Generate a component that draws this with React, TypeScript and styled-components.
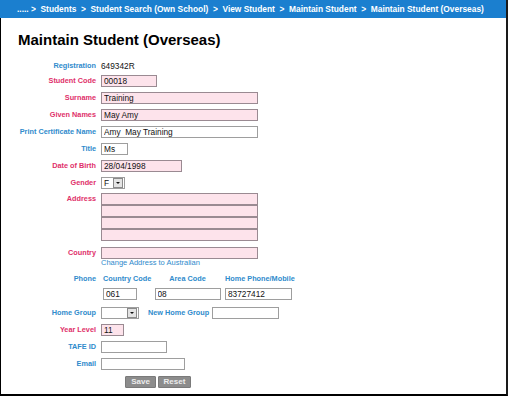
import React from "react";
import styled, { createGlobalStyle } from "styled-components";

const GlobalStyle = createGlobalStyle`
  html, body { margin: 0; padding: 0; background: #fff; }
  body { font-family: "Liberation Sans", Arial, sans-serif; }
  * { box-sizing: border-box; }
`;

const BLUE = "#2f8bcc";
const RED = "#e0306a";

const Page = styled.div`
  width: 508px;
  height: 396px;
  display: flex;
  flex-direction: column;
`;

const Bar = styled.div`
  height: 18px;
  flex: none;
  background: #1b7fcf;
  border-right: 2px solid #1a1a1a;
  color: #fff;
  font-weight: bold;
  font-size: 8.4px;
  line-height: 18px;
  padding-left: 17px;
  white-space: pre;
`;

const Main = styled.div`
  flex: 1;
  border-left: 1px solid #000;
  border-right: 2px solid #1a1a1a;
  border-bottom: 2px solid #000;
  padding-top: 13px;
`;

const Title = styled.h1`
  margin: 0 0 0 17px;
  font-size: 15px;
  line-height: 18px;
  font-weight: bold;
  color: #000;
`;

const Form = styled.div`
  margin-top: 11px;
  display: flex;
  flex-direction: column;
`;

const Row = styled.div<{ $gap?: number }>`
  display: flex;
  align-items: flex-start;
  margin-top: ${(p) => p.$gap ?? 5}px;
`;

const Label = styled.div<{ $req?: boolean }>`
  width: 95px;
  margin-right: 5px;
  flex: none;
  text-align: right;
  font-weight: bold;
  font-size: 7.3px;
  line-height: 12px;
  color: ${(p) => (p.$req ? RED : BLUE)};
  white-space: nowrap;
`;

const InlineLabel = styled.div`
  font-weight: bold;
  font-size: 7.3px;
  line-height: 12px;
  color: ${BLUE};
  white-space: nowrap;
  margin: 0 3px 0 9px;
`;

const Value = styled.div`
  font-size: 8.3px;
  line-height: 12px;
  color: #111;
`;

const Input = styled.input<{ $w: number; $req?: boolean }>`
  width: ${(p) => p.$w}px;
  height: 12px;
  margin: 0;
  padding: 0 2px;
  border: 1px solid ${(p) => (p.$req ? "#9a8a92" : "#9e9e9e")};
  background: ${(p) => (p.$req ? "#fde3eb" : "#fff")};
  font-family: "Liberation Sans", Arial, sans-serif;
  font-size: 8.3px;
  line-height: 10px;
  color: #111;
  outline: none;
  border-radius: 0;
  display: block;
`;

const Stack = styled.div`
  display: flex;
  flex-direction: column;
`;

const SelectBox = styled.div<{ $w: number }>`
  width: ${(p) => p.$w}px;
  height: 12px;
  border: 1px solid #9e9e9e;
  background: #fff;
  display: flex;
  align-items: center;
  justify-content: space-between;
  padding: 0 1px 0 2px;
  font-size: 8.3px;
  line-height: 10px;
  color: #111;
`;

const SelectArrow = styled.div`
  width: 10px;
  height: 10px;
  background: #e4e4e4;
  border: 1px solid #8a8a8a;
  display: flex;
  align-items: center;
  justify-content: center;
  &::after {
    content: "";
    border-left: 2px solid transparent;
    border-right: 2px solid transparent;
    border-top: 2px solid #111;
  }
`;

const LinkText = styled.a`
  font-size: 7.5px;
  line-height: 8px;
  color: ${BLUE};
  text-decoration: none;
`;

const PhoneGrid = styled.div`
  display: grid;
  grid-template-columns: 47px 75px 69px;
  grid-template-rows: 12px 12px;
  row-gap: 3px;
  margin-left: 2px;
`;

const PhoneHead = styled.div`
  text-align: center;
  font-weight: bold;
  font-size: 7.3px;
  line-height: 12px;
  color: ${BLUE};
  white-space: nowrap;
`;

const Cell = styled.div<{ $align: "start" | "center" }>`
  justify-self: ${(p) => p.$align};
`;

const Buttons = styled.div`
  display: flex;
  gap: 2px;
  margin-left: 24px;
`;

const Button = styled.button<{ $w: number }>`
  width: ${(p) => p.$w}px;
  height: 12px;
  padding: 0;
  margin: 0;
  background: #8c8c8c;
  border: 1px solid #7a7a7a;
  border-radius: 1px;
  color: #ececec;
  font-family: "Liberation Sans", Arial, sans-serif;
  font-weight: bold;
  font-size: 8px;
  line-height: 10px;
`;

export default function App() {
  return (
    <>
      <GlobalStyle />
      <Page>
        <Bar>{"..... >  Students  >  Student Search (Own School)  >  View Student  >  Maintain Student  >  Maintain Student (Overseas)"}</Bar>
        <Main>
          <Title>Maintain Student (Overseas)</Title>
          <Form>
            <Row $gap={0}>
              <Label>Registration</Label>
              <Value>649342R</Value>
            </Row>
            <Row $gap={3}>
              <Label $req>Student Code</Label>
              <Input $w={56} $req defaultValue="00018" />
            </Row>
            <Row>
              <Label $req>Surname</Label>
              <Input $w={157} $req defaultValue="Training" />
            </Row>
            <Row>
              <Label $req>Given Names</Label>
              <Input $w={157} $req defaultValue="May Amy" />
            </Row>
            <Row>
              <Label>Print Certificate Name</Label>
              <Input $w={157} defaultValue="Amy  May Training" />
            </Row>
            <Row>
              <Label>Title</Label>
              <Input $w={27} defaultValue="Ms" />
            </Row>
            <Row>
              <Label $req>Date of Birth</Label>
              <Input $w={81} $req defaultValue="28/04/1998" />
            </Row>
            <Row>
              <Label $req>Gender</Label>
              <SelectBox $w={24}>
                <span>F</span>
                <SelectArrow />
              </SelectBox>
            </Row>
            <Row $gap={4}>
              <Label $req>Address</Label>
              <Stack>
                <Input $w={157} $req />
                <Input $w={157} $req />
                <Input $w={157} $req />
                <Input $w={157} $req />
              </Stack>
            </Row>
            <Row $gap={6}>
              <Label $req>Country</Label>
              <Input $w={157} $req />
            </Row>
            <Row $gap={0}>
              <Label />
              <LinkText href="#">Change Address to Australian</LinkText>
            </Row>
            <Row $gap={6}>
              <Label>Phone</Label>
              <PhoneGrid>
                <PhoneHead>Country Code</PhoneHead>
                <PhoneHead>Area Code</PhoneHead>
                <PhoneHead>Home Phone/Mobile</PhoneHead>
                <Cell $align="start">
                  <Input $w={34} defaultValue="061" />
                </Cell>
                <Cell $align="center">
                  <Input $w={66} defaultValue="08" />
                </Cell>
                <Cell $align="start">
                  <Input $w={67} defaultValue="83727412" />
                </Cell>
              </PhoneGrid>
            </Row>
            <Row $gap={7}>
              <Label>Home Group</Label>
              <SelectBox $w={38}>
                <span />
                <SelectArrow />
              </SelectBox>
              <InlineLabel>New Home Group</InlineLabel>
              <Input $w={67} />
            </Row>
            <Row>
              <Label $req>Year Level</Label>
              <Input $w={23} $req defaultValue="11" />
            </Row>
            <Row>
              <Label>TAFE ID</Label>
              <Input $w={66} />
            </Row>
            <Row>
              <Label>Email</Label>
              <Input $w={84} />
            </Row>
            <Row $gap={6}>
              <Label />
              <Buttons>
                <Button $w={31}>Save</Button>
                <Button $w={33}>Reset</Button>
              </Buttons>
            </Row>
          </Form>
        </Main>
      </Page>
    </>
  );
}
